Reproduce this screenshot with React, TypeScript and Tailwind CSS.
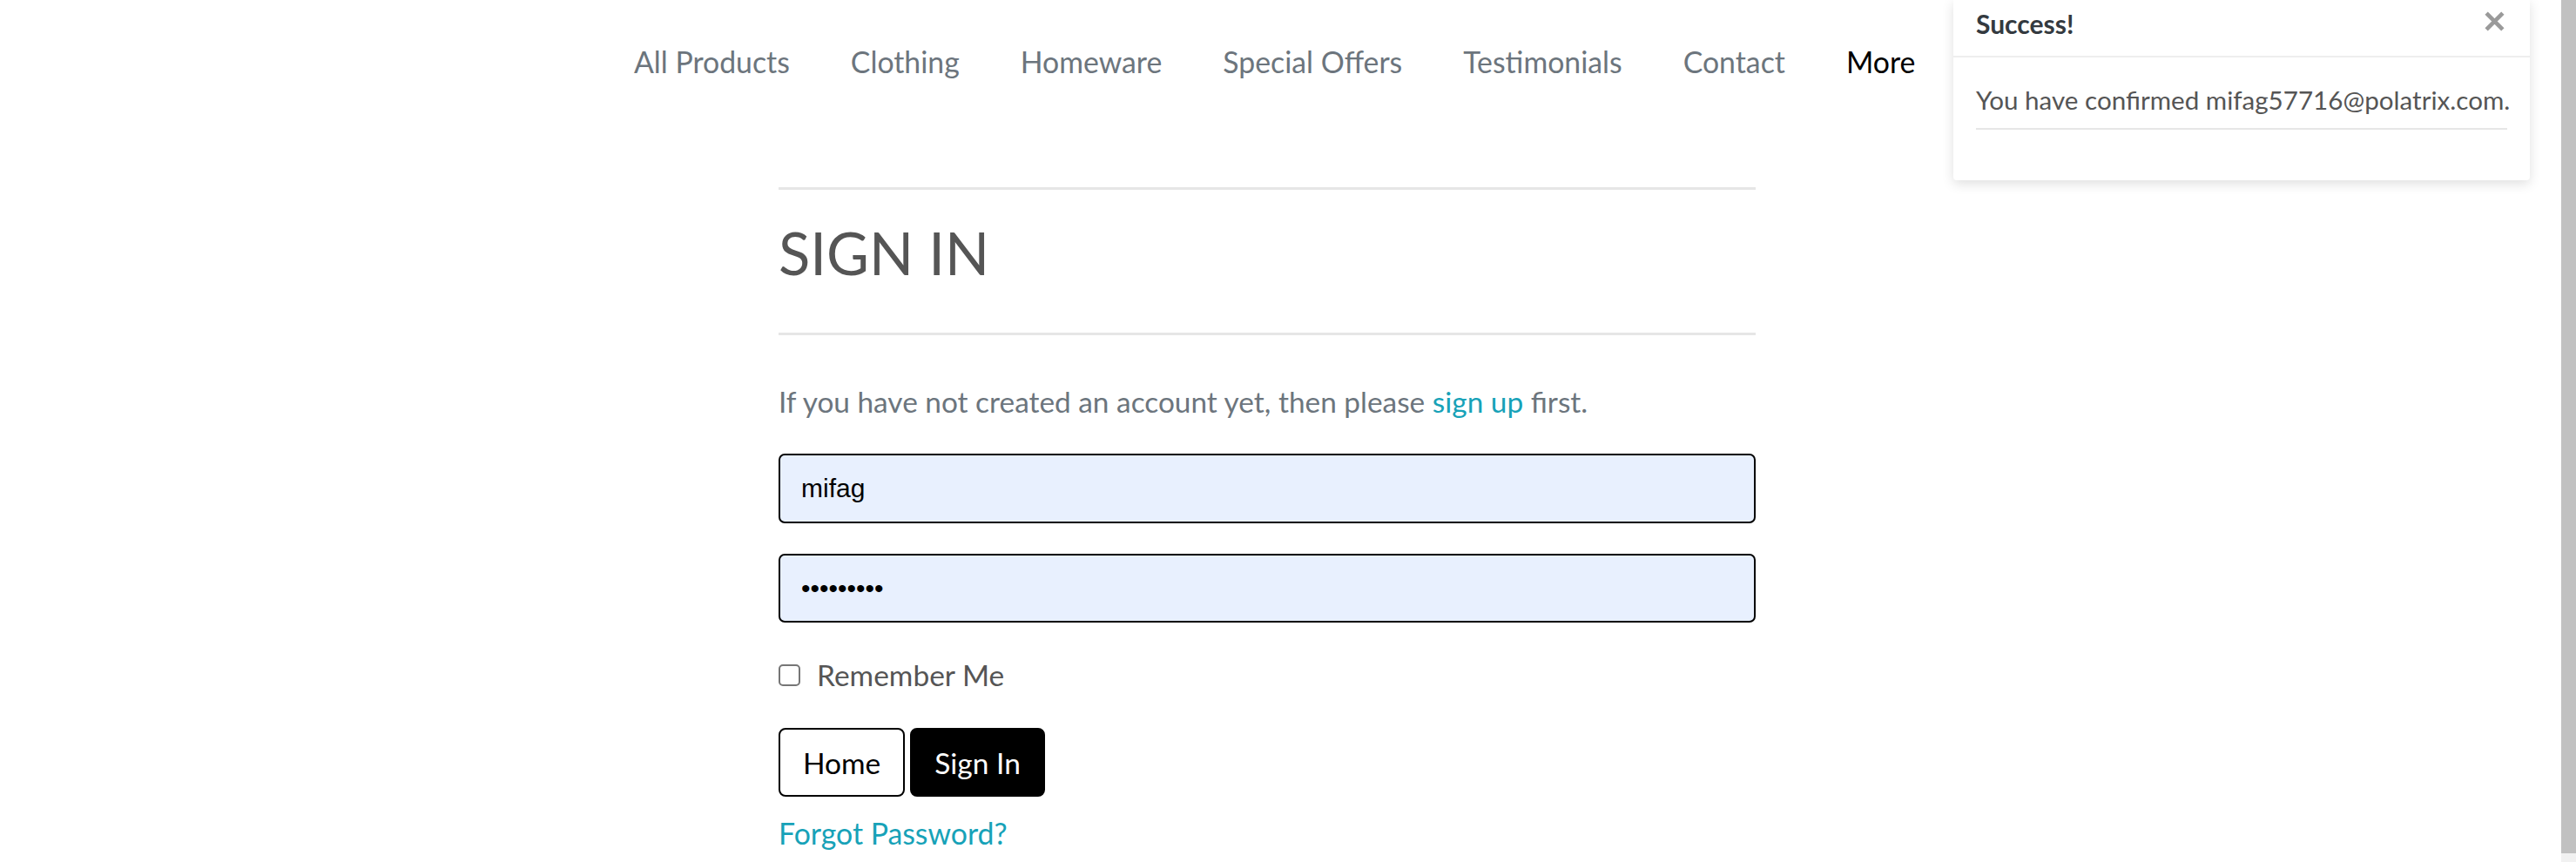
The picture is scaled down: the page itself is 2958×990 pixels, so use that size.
import React from "react";

const navItems = [
	"All Products",
	"Clothing",
	"Homeware",
	"Special Offers",
	"Testimonials",
	"Contact",
];

const Toast: React.FC = () => {
	return (
		<div className="absolute left-[2243px] top-0 w-[662px] h-[207px] bg-white shadow-[0_4px_14px_rgba(0,0,0,0.13)] rounded-b-[4px]">
			<div className="flex items-start justify-between h-[66px] pt-[4px] pl-[26px] pr-[28px] border-b-2 border-[#eeeeee]">
				<span className="text-[30px] leading-[46px] font-bold text-[#343a40]">Success!</span>
				<svg width="25" height="25" viewBox="0 0 24 24" className="mt-[8px]">
					<path
						d="M3 3 L21 21 M21 3 L3 21"
						stroke="#9a9a9a"
						strokeWidth="4.5"
						strokeLinecap="butt"
					/>
				</svg>
			</div>
			<div className="px-[26px] pt-[27px]">
				<p className="text-[29.6px] leading-[44px] text-[#555555] pb-[10px] border-b-2 border-[#e6e6e6] whitespace-nowrap">
					You have confirmed mifag57716@polatrix.com.
				</p>
			</div>
		</div>
	);
};

export default function App() {
	return (
		<div className="relative w-[2958px] h-[990px] overflow-hidden bg-white font-['Lato','Liberation_Sans',sans-serif]">
			<nav className="h-[144px] flex items-center gap-[70px] pl-[728px] pb-[1px]">
				{navItems.map((item) => (
					<a key={item} className="text-[33.8px] text-[#6c757d]">
						{item}
					</a>
				))}
				<a className="text-[33.8px] text-black">More</a>
			</nav>

			<main className="pl-[894px] pt-[71px]">
				<div className="w-[1122px]">
					<hr className="border-0 border-t-[3px] border-[#e6e6e6]" />
					<h2 className="mt-[32px] text-[67px] leading-[1.2] font-normal text-[#555555]">
						SIGN IN
					</h2>
					<hr className="mt-[52px] border-0 border-t-[3px] border-[#e6e6e6]" />
					<p className="mt-[54px] text-[33.4px] leading-[45px] text-[#6c757d]">
						If you have not created an account yet, then please{" "}
						<a className="text-[#17a2b8]">sign up</a> first.
					</p>

					<form className="mt-[37px] flex flex-col">
						<input
							type="text"
							defaultValue="mifag"
							readOnly
							className="h-[80px] w-full rounded-[7px] border-2 border-black bg-[#e8f0fe] px-[24px] text-[30px] text-black font-['Liberation_Sans',Arial,sans-serif] outline-none"
						/>
						<input
							type="password"
							defaultValue="123456789"
							readOnly
							className="mt-[35px] h-[79px] w-full rounded-[7px] border-2 border-black bg-[#e8f0fe] px-[24px] text-[30px] text-black font-['Liberation_Sans',Arial,sans-serif] outline-none"
						/>

						<label className="mt-[38px] flex items-center gap-[19px] text-[33.5px] leading-[45px] text-[#555555]">
							<span className="w-[25px] h-[25px] rounded-[5px] border-2 border-[#767676] bg-white" />
							Remember Me
						</label>

						<div className="mt-[38px] flex gap-[6px]">
							<button
								type="button"
								className="h-[79px] px-[26px] rounded-[8px] border-2 border-black bg-white text-[33.5px] text-black"
							>
								Home
							</button>
							<button
								type="button"
								className="h-[79px] px-[26px] rounded-[8px] border-2 border-black bg-black text-[33.5px] text-white"
							>
								Sign In
							</button>
						</div>

						<a className="mt-[20px] text-[33.8px] leading-[45px] text-[#17a2b8]">
							Forgot Password?
						</a>
					</form>
				</div>
			</main>

			<Toast />

			<div className="absolute right-0 top-0 w-[17px] h-full bg-[#f1f1f1]">
				<div className="mx-auto w-[17px] h-[980px] bg-[#c1c1c1]" />
			</div>
		</div>
	);
}
